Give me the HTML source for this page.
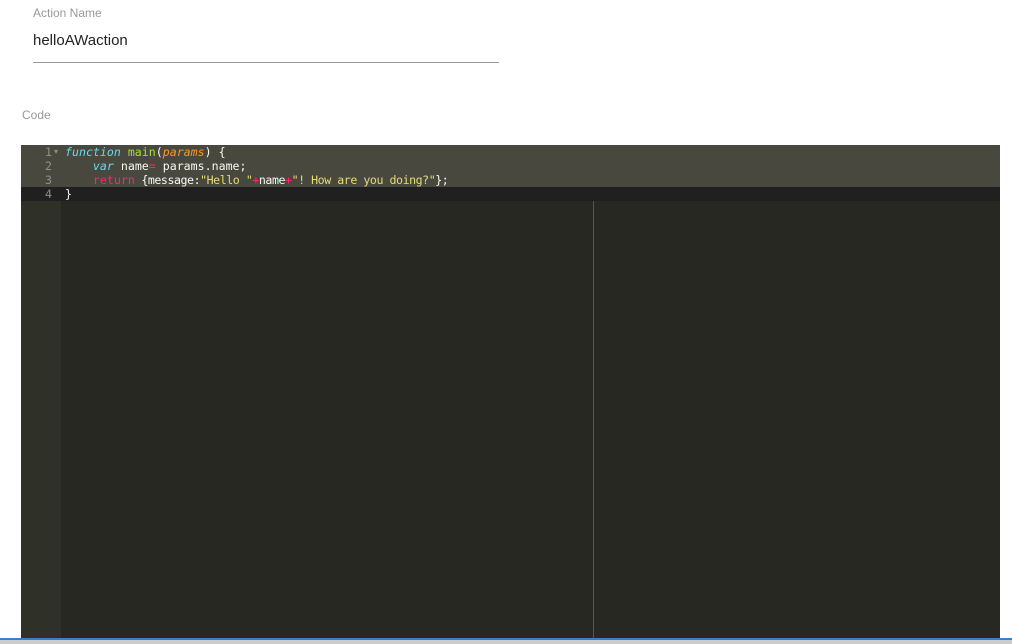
<!DOCTYPE html>
<html><head><style>
body{margin:0;width:1012px;height:644px;background:#fff;position:relative;overflow:hidden;font-family:"Liberation Sans",sans-serif}
.lbl{position:absolute;color:#999;font-size:12px}
#ed{position:absolute;left:21px;top:145px;width:979px;height:494px;background:#272822;overflow:hidden}
.ln{position:absolute;height:14px;font:11.6px/15px "DejaVu Sans Mono",monospace;white-space:pre}
.num{left:0;width:31px;text-align:right;color:#8f908a}
.code{left:44px;color:#f8f8f2}
.k{color:#66d9ef;font-style:italic}.f{color:#a6e22e}.p{color:#fd971f;font-style:italic}.r{color:#f92672}.s{color:#e6db74}
</style></head><body>
<div class="lbl" style="left:33px;top:6px">Action Name</div>
<div style="position:absolute;left:33px;top:32px;font-size:15px;color:#222">helloAWaction</div>
<div style="position:absolute;left:33px;top:62px;width:466px;height:1px;background:#999"></div>
<div class="lbl" style="left:22px;top:108px">Code</div>
<div id="ed">
<div style="position:absolute;left:0;top:0;width:979px;height:42px;background:#49483e"></div>
<div style="position:absolute;left:0;top:42px;width:979px;height:14px;background:#202020"></div>
<div style="position:absolute;left:0;top:56px;width:40px;height:440px;background:#2f3129"></div>
<div style="position:absolute;left:572px;top:56px;width:1px;height:440px;background:#555"></div>
<div class="ln num" style="top:0">1</div><div style="position:absolute;left:33px;top:0;color:#8f908a;font-size:8px;line-height:14px">▾</div>
<div class="ln num" style="top:14px">2</div>
<div class="ln num" style="top:28px">3</div>
<div class="ln num" style="top:42px">4</div>
<div class="ln code" style="top:0"><span class="k">function</span> <span class="f">main</span>(<span class="p">params</span>) {</div>
<div class="ln code" style="top:14px">    <span class="k">var</span> name<span class="r">=</span> params.name;</div>
<div class="ln code" style="top:28px">    <span class="r">return</span><span style="letter-spacing:-0.45px"> {message:<span class="s">"Hello "</span><span class="r">+</span>name<span class="r">+</span><span class="s">"! How are you doing?"</span>};</span></div>
<div class="ln code" style="top:42px">}</div>
</div>
<div style="position:absolute;left:0;top:638px;width:1012px;height:2px;background:#3c7fc0"></div>
<div style="position:absolute;left:0;top:640px;width:1012px;height:4px;background:#ccc"></div>
</body></html>
